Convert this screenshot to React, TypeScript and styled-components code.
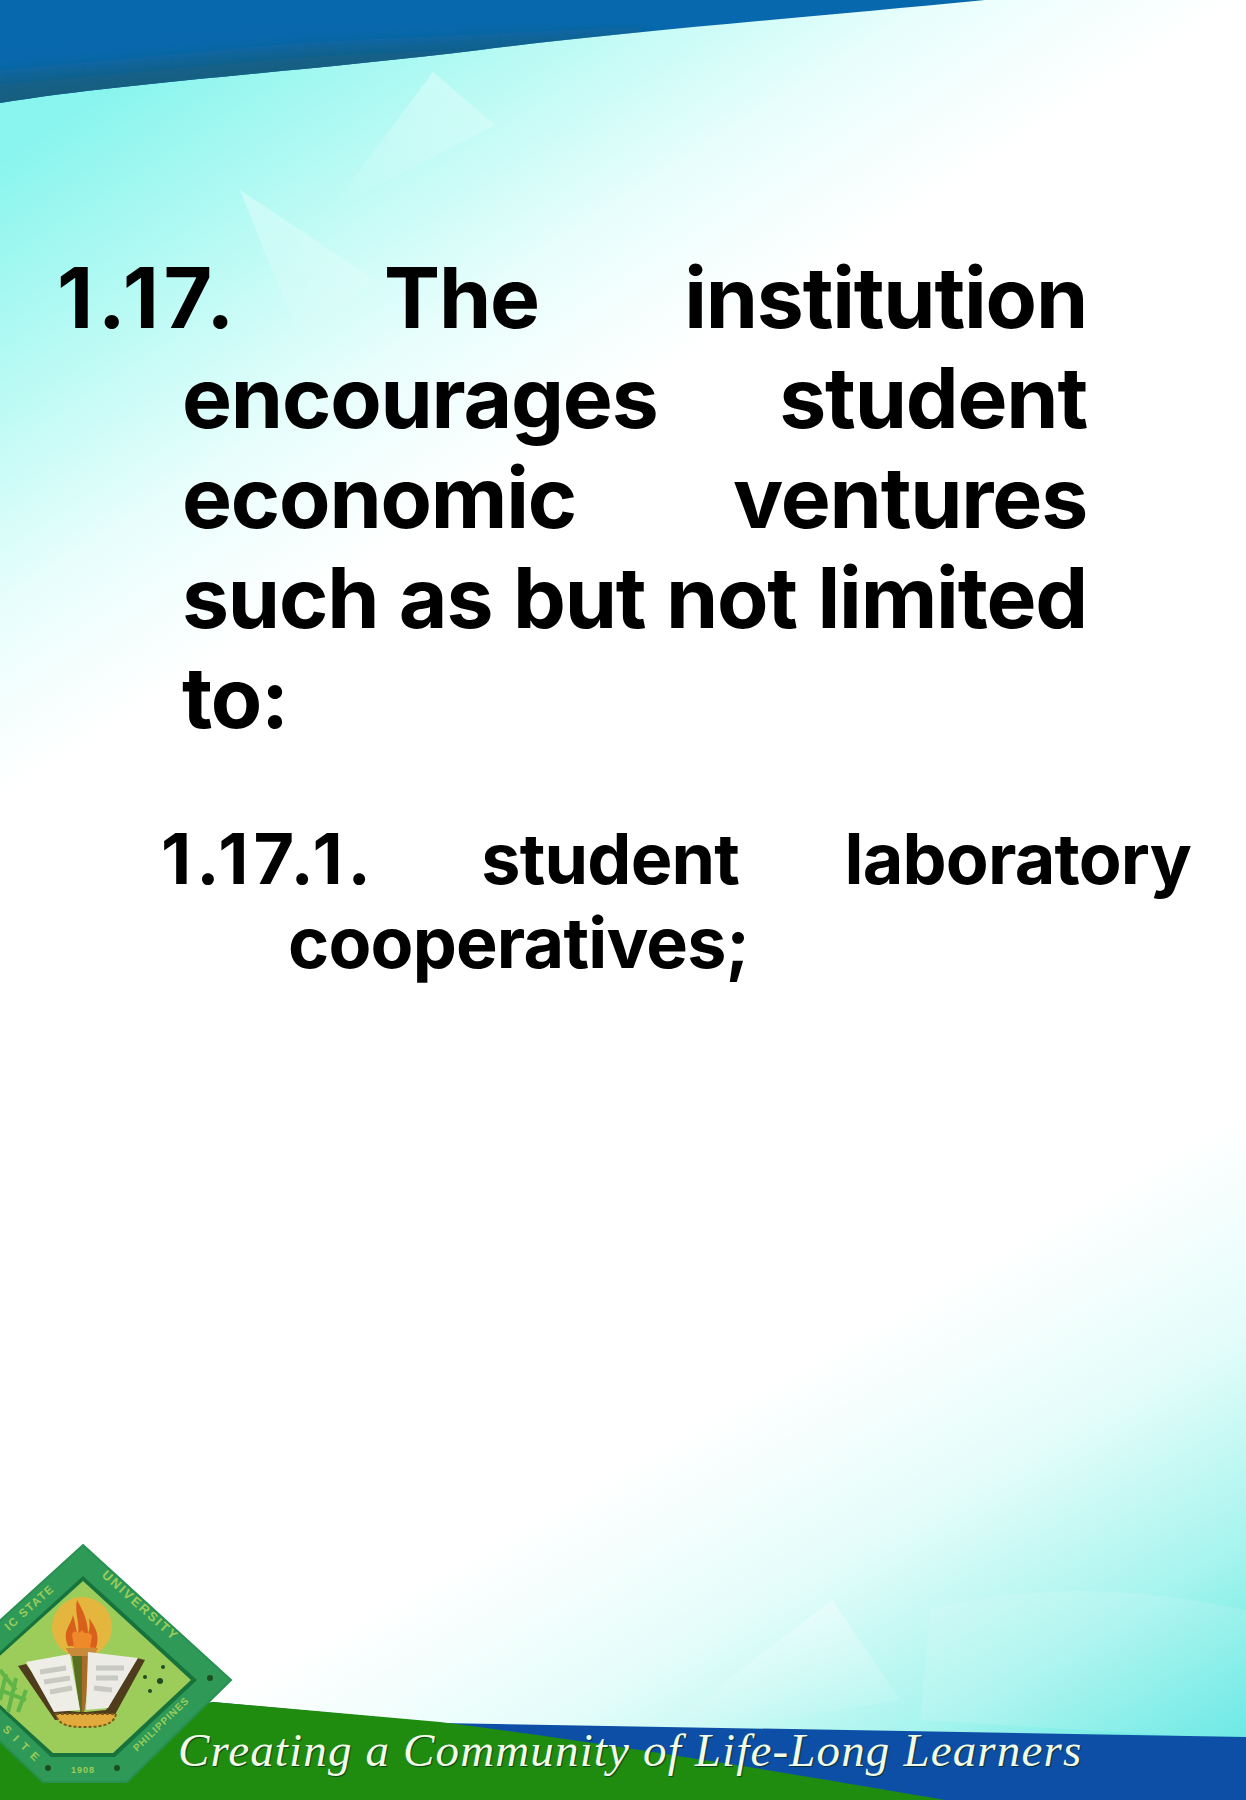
import React from 'react';
import styled, { createGlobalStyle } from 'styled-components';

const Global = createGlobalStyle`
  html, body { margin: 0; padding: 0; background: #fff; }
`;

const Slide = styled.main`
  position: relative;
  width: 1246px;
  height: 1800px;
  overflow: hidden;
  background: #fff;
  font-family: Inter, "Liberation Sans", sans-serif;
  font-weight: 700;
  color: #000;
`;

const Backdrop = styled.svg`
  position: absolute;
  inset: 0;
  width: 1246px;
  height: 1800px;
`;

const Content = styled.div`
  position: relative;
  display: flex;
  flex-direction: column;
  padding-top: 248px;
`;

const Item = styled.p<{ $left: number; $hang: number; $right: number; $size: number; $line: number; $spacing: number }>`
  margin: 0;
  box-sizing: border-box;
  width: ${p => p.$right}px;
  padding-left: ${p => p.$left}px;
  text-indent: ${p => -p.$hang}px;
  font-size: ${p => p.$size}px;
  line-height: ${p => p.$line}px;
  letter-spacing: ${p => p.$spacing}px;
  text-align: justify;
`;

const SubItem = styled(Item)`
  margin-top: 69px;
`;

const Numeral = styled.span<{ $spacing: number }>`
  letter-spacing: ${p => p.$spacing}px;
`;

const Tagline = styled.div`
  position: absolute;
  left: 178px;
  top: 1718px;
  font-family: "Liberation Serif", serif;
  font-style: italic;
  font-weight: 400;
  font-size: 47px;
  line-height: 64px;
  letter-spacing: 1.15px;
  white-space: nowrap;
  color: #f2fbe6;
  text-shadow: 1px 1px 1px rgba(0, 40, 30, 0.75);
`;

const Emblem = () => (
  <g>
    <path d="M83 1545 L231 1680 L127 1782 L43 1782 L-65 1680 Z" fill="#2f9a58" stroke="#289050" strokeWidth="2" />
    <path d="M83 1576 L197 1680 L115 1757 L51 1757 L-31 1680 Z" fill="#17733c" />
    <path d="M83 1581 L191 1680 L113 1753 L53 1753 L-27 1680 Z" fill="#9ccc5a" />
    <circle cx="82" cy="1627" r="30" fill="#f2b23a" opacity="0.85" />
    <path d="M68 1646 C62 1630 70 1628 73 1615 C76 1626 76 1630 78 1634 C80 1622 74 1612 77 1600 C84 1612 88 1622 88 1634 C90 1628 90 1624 89 1618 C96 1628 100 1636 96 1648 Z" fill="#d9601c" />
    <path d="M72 1634 C76 1628 78 1636 82 1630 C86 1636 88 1630 92 1636 L90 1648 L74 1648 Z" fill="#ef8a2a" />
    <path d="M66 1648 L98 1648 L94 1656 L70 1656 Z" fill="#c98b3a" />
    <path d="M72 1656 L92 1656 L84 1712 L80 1712 Z" fill="#5a6e22" />
    <path d="M82 1656 L92 1656 L84 1712 L82 1712 Z" fill="#a86b28" />
    <path d="M18 1666 L26 1664 L60 1710 L80 1712 L86 1712 L106 1710 L137 1658 L145 1660 L112 1720 L55 1720 Z" fill="#4e3c1c" />
    <path d="M26 1662 L70 1654 L80 1710 L54 1712 Z" fill="#efeee6" />
    <path d="M88 1652 L138 1658 L108 1708 L86 1710 Z" fill="#ecebe6" />
    <path d="M40 1672 L66 1668 M44 1682 L70 1678 M50 1692 L72 1688 M96 1668 L124 1668 M96 1678 L118 1678 M94 1688 L112 1690" stroke="#b8bcb4" strokeWidth="5" opacity="0.7" />
    <path d="M56 1714 L116 1714 C114 1724 104 1727 84 1727 C66 1727 58 1724 56 1714 Z" fill="#e2a93c" stroke="#7a5a18" strokeWidth="2" strokeDasharray="3 2" />
    <g fill="#1f4d22">
      <circle cx="160" cy="1681" r="3" />
      <circle cx="145" cy="1677" r="2" />
      <circle cx="163" cy="1667" r="2" />
      <circle cx="150" cy="1691" r="2" />
      <circle cx="210" cy="1678" r="3" />
      <circle cx="48" cy="1768" r="3" />
      <circle cx="117" cy="1768" r="3" />
    </g>
    <path d="M0 1670 L16 1690 M0 1690 L26 1700 M6 1674 L0 1700 M16 1678 L8 1712 M26 1690 L18 1712" stroke="#5fb548" strokeWidth="4" fill="none" />
    <g fontFamily="'Liberation Sans', sans-serif" fontWeight="700" fill="#9ccc5a">
      <text fontSize="13" letterSpacing="2" transform="translate(101 1576) rotate(42)">UNIVERSITY</text>
      <text fontSize="11.5" letterSpacing="1.4" transform="translate(9 1631) rotate(-42)">IC STATE</text>
      <text fontSize="10" letterSpacing="1" transform="translate(137 1752) rotate(-44)">PHILIPPINES</text>
      <text fontSize="11" letterSpacing="2" transform="translate(2 1730) rotate(44)">S I T E</text>
      <text x="71" y="1773" fontSize="9" letterSpacing="1">1908</text>
    </g>
  </g>
);

export default function App() {
  return (
    <>
      <Global />
      <Slide>
        <Backdrop viewBox="0 0 1246 1800" aria-hidden="true">
          <defs>
            <linearGradient id="topWash" gradientUnits="userSpaceOnUse" x1="-10" y1="170" x2="280" y2="620">
              <stop offset="0" stopColor="#8af5ee" />
              <stop offset="0.35" stopColor="#b8faf4" />
              <stop offset="0.7" stopColor="#e8fefc" />
              <stop offset="1" stopColor="#ffffff" />
            </linearGradient>
            <linearGradient id="bottomWash" gradientUnits="userSpaceOnUse" x1="1200" y1="1760" x2="930" y2="1290">
              <stop offset="0" stopColor="#5be7e2" />
              <stop offset="0.3" stopColor="#a6f4ee" />
              <stop offset="0.65" stopColor="#e4fdfa" />
              <stop offset="1" stopColor="#ffffff" />
            </linearGradient>
            <linearGradient id="ray" x1="0" y1="0" x2="0" y2="1">
              <stop offset="0" stopColor="#ffffff" stopOpacity="0.35" />
              <stop offset="1" stopColor="#ffffff" stopOpacity="0" />
            </linearGradient>
            <clipPath id="topBlueClip">
              <path d="M0 0 L985 0 C800 18 620 32 480 50 C300 72 130 82 0 103 Z" />
            </clipPath>
            <filter id="soft">
              <feGaussianBlur stdDeviation="11" />
            </filter>
          </defs>
          <rect width="1246" height="900" fill="url(#topWash)" />
          <rect y="900" width="1246" height="900" fill="url(#bottomWash)" />
          <path d="M433 72 L495 125 L330 210 Z" fill="url(#ray)" />
          <path d="M240 190 L375 280 L300 340 Z" fill="url(#ray)" />
          <path d="M832 1600 L900 1700 L650 1740 Z" fill="url(#ray)" />
          <path d="M930 1610 C1040 1580 1150 1590 1246 1610 L1246 1740 L920 1720 Z" fill="#ffffff" opacity="0.12" />
          <path d="M0 0 L985 0 C800 18 620 32 480 50 C300 72 130 82 0 103 Z" fill="#0868ae" />
          <g clipPath="url(#topBlueClip)">
            <path d="M-30 80 L300 50 L640 34 L660 50 L0 125 Z" fill="#135f80" filter="url(#soft)" />
          </g>
          <path d="M213 1702 L440 1723 L1246 1737 L1246 1800 L0 1800 L0 1740 Z" fill="#0d4fa6" />
          <path d="M213 1702 L440 1722 C620 1745 800 1775 945 1800 L0 1800 L0 1740 Z" fill="#1f8c10" />
          <Emblem />
        </Backdrop>
        <Content>
          <Item $left={182} $hang={125} $right={1087} $size={84} $line={100} $spacing={-1.2}>
            <Numeral $spacing={4.5}>1.17.</Numeral> The institution encourages student economic ventures such as but not limited to:
          </Item>
          <SubItem $left={288} $hang={127} $right={1191} $size={70} $line={84} $spacing={-0.8}>
            <Numeral $spacing={5}>1.17.1.</Numeral> student laboratory cooperatives;
          </SubItem>
        </Content>
        <Tagline>Creating a Community of Life-Long Learners</Tagline>
      </Slide>
    </>
  );
}
